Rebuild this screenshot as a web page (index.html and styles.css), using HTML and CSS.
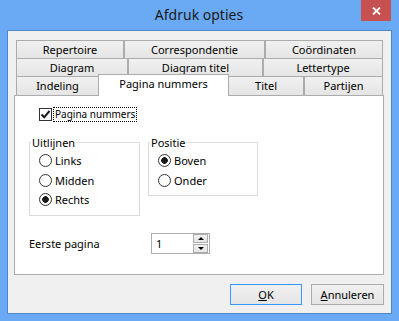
FILE: index.html
```html
<!DOCTYPE html>
<html lang="nl">
	<head>
		<meta charset="UTF-8" />
		<title>Afdruk opties</title>
		<link rel="stylesheet" href="styles.css">
	</head>
	<body>
		<div class="window">
			<div class="titlebar">
				<span class="title">Afdruk opties</span>
				<button class="close" type="button">
					<svg width="9" height="8" viewBox="0 0 9 8">
						<path d="M1 0.5 L8 7.5 M8 0.5 L1 7.5" stroke="#fff" stroke-width="1.8" fill="none" />
					</svg>
				</button>
			</div>

			<div class="client">
				<div class="tabs">
					<div class="tab-row">
						<div class="tab" style="width: 108px">Repertoire</div>
						<div class="tab" style="width: 141px">Correspondentie</div>
						<div class="tab" style="width: 118px">Coördinaten</div>
					</div>
					<div class="tab-row">
						<div class="tab" style="width: 112px">Diagram</div>
						<div class="tab" style="width: 135px">Diagram titel</div>
						<div class="tab" style="width: 120px">Lettertype</div>
					</div>
					<div class="tab-row last">
						<div class="tab" style="width: 83px">Indeling</div>
						<div class="tab active" style="width: 131px">Pagina nummers</div>
						<div class="tab" style="width: 76px">Titel</div>
						<div class="tab" style="width: 79px">Partijen</div>
					</div>
				</div>

				<div class="panel">
					<div class="check-row">
						<span class="checkbox">
							<svg width="11" height="11" viewBox="0 0 11 11">
								<path d="M1.5 5.5 L4.2 8.3 L9.5 2" stroke="#1a1a1a" stroke-width="2" fill="none" />
							</svg>
						</span>
						<span class="focus-label">Pagina nummers</span>
					</div>

					<div class="groups">
						<fieldset class="group uitlijnen">
							<legend>Uitlijnen</legend>
							<div class="radio-row"><span class="radio"></span>Links</div>
							<div class="radio-row"><span class="radio"></span>Midden</div>
							<div class="radio-row"><span class="radio checked"></span>Rechts</div>
						</fieldset>
						<fieldset class="group positie">
							<legend>Positie</legend>
							<div class="radio-row"><span class="radio checked"></span>Boven</div>
							<div class="radio-row"><span class="radio"></span>Onder</div>
						</fieldset>
					</div>

					<div class="field-row">
						<span class="field-label">Eerste pagina</span>
						<div class="spinbox">
							<span class="spin-value">1</span>
							<div class="spin-buttons">
								<span class="spin-btn up"></span>
								<span class="spin-btn down"></span>
							</div>
						</div>
					</div>
				</div>

				<div class="buttons">
					<button class="btn default" type="button"><u>O</u>K</button>
					<button class="btn" type="button"><u>A</u>nnuleren</button>
				</div>
			</div>
		</div>
	</body>
</html>
```

FILE: styles.css
```css
body {
	margin: 0;
	font-family: "Noto Sans", "Open Sans", sans-serif;
	font-size: 11px;
	color: #000;
}

.window {
	width: 399px;
	height: 321px;
	box-sizing: border-box;
	background-color: #6aaaf4;
	padding: 0 7px 7px 7px;
	display: flex;
	flex-direction: column;
}

.titlebar {
	height: 30px;
	flex: none;
	display: grid;
	grid-template-columns: 1fr auto 1fr;
	padding-right: 1px;
}

.title {
	grid-column: 2;
	font-size: 14px;
	line-height: 30px;
	color: #1a1a1a;
}

.close {
	grid-column: 3;
	justify-self: end;
	width: 30px;
	height: 21px;
	border: none;
	padding: 0;
	background-color: #c75050;
	display: flex;
	align-items: center;
	justify-content: center;
}

.client {
	flex: 1;
	background-color: #f0f0f0;
	border: 1px solid #4f86c6;
	padding: 9px 7px 8px 6px;
	display: flex;
	flex-direction: column;
}

/* tab strip, three rows */
.tabs {
	margin-left: 2px;
}

.tab-row {
	display: flex;
	height: 18px;
}

.tab-row.last {
	height: 19px;
	position: relative;
	z-index: 1;
}

.tab {
	box-sizing: border-box;
	border: 1px solid #acacac;
	border-bottom: none;
	background: linear-gradient(#f0f0f0, #e5e5e5);
	text-align: center;
	line-height: 17px;
	white-space: nowrap;
}

.tab-row.last .tab {
	line-height: 18px;
}

.tab-row.last .tab.active {
	background: #fff;
	height: 22px;
	margin: -2px -1px 0 -1px;
	line-height: 15px;
	padding-top: 1px;
}

.panel {
	box-sizing: border-box;
	width: 370px;
	height: 180px;
	background-color: #fff;
	border: 1px solid #acacac;
	padding: 11px 0 0 14px;
}

.check-row {
	display: flex;
	align-items: center;
	height: 15px;
	margin-left: 10px;
}

.checkbox {
	box-sizing: border-box;
	width: 13px;
	height: 13px;
	border: 1px solid #333;
	background-color: #fff;
	display: flex;
}

.focus-label {
	margin-left: 1px;
	padding: 0 1px;
	border: 1px dotted #000;
	font-size: 10px;
	line-height: 13px;
}

.groups {
	display: flex;
	align-items: flex-start;
	gap: 8px;
	margin-top: 13px;
}

.group {
	box-sizing: border-box;
	margin: 0;
	min-width: 0;
	border: 1px solid #dcdcdc;
	padding: 1px 8px 5px 9px;
}

.uitlijnen {
	width: 111px;
}

.positie {
	width: 110px;
}

.group legend {
	padding: 0 1px;
	margin-left: -8px;
	line-height: 15px;
}

.radio-row {
	display: flex;
	align-items: center;
	gap: 3px;
	height: 19.5px;
}

.radio {
	box-sizing: border-box;
	width: 13px;
	height: 13px;
	border: 1px solid #333;
	border-radius: 50%;
	background-color: #fff;
}

.radio.checked {
	background: radial-gradient(circle, #1a1a1a 0 3px, #fff 3.6px);
}

.field-row {
	display: flex;
	align-items: center;
	margin-top: 17px;
}

.field-label {
	width: 122px;
}

.spinbox {
	box-sizing: border-box;
	width: 59px;
	height: 21px;
	border: 1px solid #abadb3;
	display: flex;
	justify-content: space-between;
}

.spin-value {
	padding-left: 4px;
	line-height: 19px;
}

.spin-buttons {
	display: flex;
	flex-direction: column;
	gap: 1px;
	margin-right: 1px;
}

.spin-btn {
	box-sizing: border-box;
	width: 15px;
	height: 9px;
	border: 1px solid #acacac;
	background: linear-gradient(#f0f0f0, #e5e5e5);
	display: flex;
	align-items: center;
	justify-content: center;
}

.spin-btn::after {
	content: "";
	border-left: 3px solid transparent;
	border-right: 3px solid transparent;
}

.spin-btn.up::after {
	border-bottom: 3px solid #000;
}

.spin-btn.down::after {
	border-top: 3px solid #000;
}

.buttons {
	display: flex;
	justify-content: flex-end;
	gap: 9px;
	margin-top: 9px;
}

.btn {
	height: 21px;
	width: 73px;
	padding: 0;
	border: 1px solid #acacac;
	background: linear-gradient(#f0f0f0, #e5e5e5);
	font-family: inherit;
	font-size: 11px;
	color: #000;
}

.btn.default {
	width: 72px;
	border-color: #3399ff;
}
```
